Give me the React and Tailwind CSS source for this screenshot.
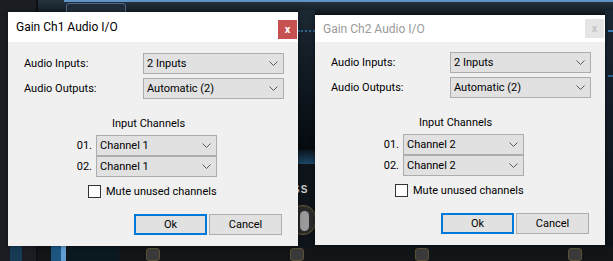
import React from "react";

function Chevron() {
  return (
    <svg width="9" height="5" viewBox="0 0 9 5" className="shrink-0">
      <path d="M0.5 0.5 L4.5 4.5 L8.5 0.5" fill="none" stroke="#5a5a5a" strokeWidth="1" />
    </svg>
  );
}

function Select({ value, wide }) {
  return (
    <div
      className={
        "flex items-center justify-between h-[21px] border border-[#adadad] bg-[#e1e1e1] pl-[3px] pr-[5px] text-[11px] text-black " +
        (wide ? "w-[141px]" : "w-[121px]")
      }
    >
      <span className="leading-[14px]">{value}</span>
      <Chevron />
    </div>
  );
}

function Dialog({ title, channel, active, titleH, closeTop, firstGap, className }) {
  return (
    <div className={"absolute w-[290px] flex flex-col bg-[#f0f0f0] shadow-[0_0_4px_rgba(0,0,0,0.5)] " + className}>
      <div className={"flex items-start justify-between bg-white " + titleH}>
        <div
          className={
            "pl-[8px] self-center text-[12px] leading-[16px] " + (active ? "text-black" : "text-[#9a9a9a]")
          }
        >
          {title}
        </div>
        <div
          className={
            "w-[19px] h-[19px] mr-[1px] flex items-center justify-center text-[11px] font-bold leading-none " +
            closeTop +
            (active ? " bg-[#c75050] text-white" : " bg-[#e5e5e5] text-[#c4c4c4]")
          }
        >
          x
        </div>
      </div>
      <div className={"flex flex-col flex-1 text-[11px] text-black " + firstGap}>
        <div className="flex items-center">
          <div className="w-[135px] pl-[16px] leading-[14px]">Audio Inputs:</div>
          <Select value="2 Inputs" wide />
        </div>
        <div className="flex items-center mt-[4px]">
          <div className="w-[135px] pl-[16px] leading-[14px]">Audio Outputs:</div>
          <Select value="Automatic (2)" wide />
        </div>
        <div className="mt-[18px] pl-[104px] leading-[14px]">Input Channels</div>
        <div className="flex items-center mt-[4px]">
          <div className="w-[88px] pr-[4px] text-right leading-[14px]">01.</div>
          <Select value={channel} />
        </div>
        <div className="flex items-center">
          <div className="w-[88px] pr-[4px] text-right leading-[14px]">02.</div>
          <Select value={channel} />
        </div>
        <div className="flex items-center h-[13px] mt-[8px] pl-[80px]">
          <div className="w-[13px] h-[13px] border border-[#333333] bg-white shrink-0" />
          <div className="ml-[5px] leading-[14px]">Mute unused channels</div>
        </div>
        <div className="flex mt-[16px] pl-[126px] gap-[2px]">
          <div className="w-[73px] h-[21px] border-2 border-[#0078d7] bg-[#e1e1e1] flex items-center justify-center leading-[14px]">
            Ok
          </div>
          <div className="w-[73px] h-[21px] border border-[#adadad] bg-[#e1e1e1] flex items-center justify-center leading-[14px]">
            Cancel
          </div>
        </div>
      </div>
    </div>
  );
}

function Background() {
  return (
    <>
      {/* top band */}
      <div className="absolute left-0 top-0 w-[613px] h-[14px] bg-gradient-to-b from-[#26333f] to-[#121a22]" />
      <div className="absolute left-[64px] top-0 w-[549px] h-[2px] bg-[#5e93c6]" />
      <div className="absolute left-0 top-0 w-[36px] h-[261px] bg-[#1a1e23]" />
      <div className="absolute left-[36px] top-0 w-[2px] h-[261px] bg-[#0c1014]" />
      <div className="absolute left-[66px] top-[3px] w-[60px] h-[12px] rounded-[3px] border border-[#4a6a88] bg-[#1f2c38]" />
      {/* gap column between dialogs */}
      <div className="absolute left-[298px] top-[10px] w-[17px] h-[140px] bg-gradient-to-b from-[#1c2833] to-[#060b10]" />
      <div className="absolute left-[298px] top-[150px] w-[17px] h-[14px] bg-gradient-to-b from-[#0b1620] to-[#1b4766]" />
      <div className="absolute left-[298px] top-[30px] w-[17px] h-[2px] border-t-2 border-dotted border-[#2e6592]" />
      <div className="absolute left-[293px] top-[182px] text-[10px] font-bold text-[#c9c9c9] tracking-[1px] font-['Liberation_Sans']">
        SS
      </div>
      <div className="absolute left-[290px] top-[205px] w-[26px] h-[30px] rounded-full border border-[#6b5a34] bg-[#2a2a2a]" />
      <div className="absolute left-[300px] top-[211px] w-[9px] h-[20px] rounded-full bg-[#9a9a9a]" />
      {/* right strip */}
      <div className="absolute left-[605px] top-[10px] w-[8px] h-[251px] bg-gradient-to-b from-[#1a2632] to-[#0b1016]" />
      <div className="absolute left-[608px] top-[30px] w-[5px] h-[2px] bg-[#3a7cb4]" />
      <div className="absolute left-[608px] top-[75px] w-[5px] h-[2px] bg-[#2b5d88]" />
      {/* bottom band */}
      <div className="absolute left-[38px] top-[246px] w-[575px] h-[15px] bg-[#121518]" />
      <div className="absolute left-[10px] top-[246px] w-[12px] h-[15px] bg-[#173a55]" />
      <div className="absolute left-[51px] top-[246px] w-[10px] h-[15px] bg-[#1c5580]" />
      <div className="absolute left-[61px] top-[246px] w-[5px] h-[15px] bg-[#5f9dd2]" />
      <div className="absolute left-[69px] top-[246px] w-[50px] h-[15px] bg-[#0a1820]" />
      <div className="absolute left-[146px] top-[248px] w-[14px] h-[13px] rounded-[3px] bg-[#3a3a3a] border border-[#5a4f34]" />
      <div className="absolute left-[290px] top-[248px] w-[14px] h-[13px] rounded-[3px] bg-[#3a3a3a] border border-[#5a4f34]" />
      <div className="absolute left-[415px] top-[248px] w-[14px] h-[13px] rounded-[3px] bg-[#3a3a3a] border border-[#5a4f34]" />
      <div className="absolute left-[568px] top-[248px] w-[14px] h-[13px] rounded-[3px] bg-[#3a3a3a] border border-[#5a4f34]" />
    </>
  );
}

export default function App() {
  return (
    <div className="relative w-[613px] h-[261px] overflow-hidden bg-[#0e1419] font-['Roboto',sans-serif]">
      <Background />
      <Dialog
        title="Gain Ch1 Audio I/O"
        channel="Channel 1"
        active
        titleH="h-[30px]"
        closeTop="mt-[8px]"
        firstGap="pt-[11px]"
        className="left-[8px] top-[12px] h-[234px]"
      />
      <Dialog
        title="Gain Ch2 Audio I/O"
        channel="Channel 2"
        active={false}
        titleH="h-[27px]"
        closeTop="mt-[4px]"
        firstGap="pt-[10px]"
        className="left-[315px] top-[15px] h-[230px]"
      />
    </div>
  );
}
